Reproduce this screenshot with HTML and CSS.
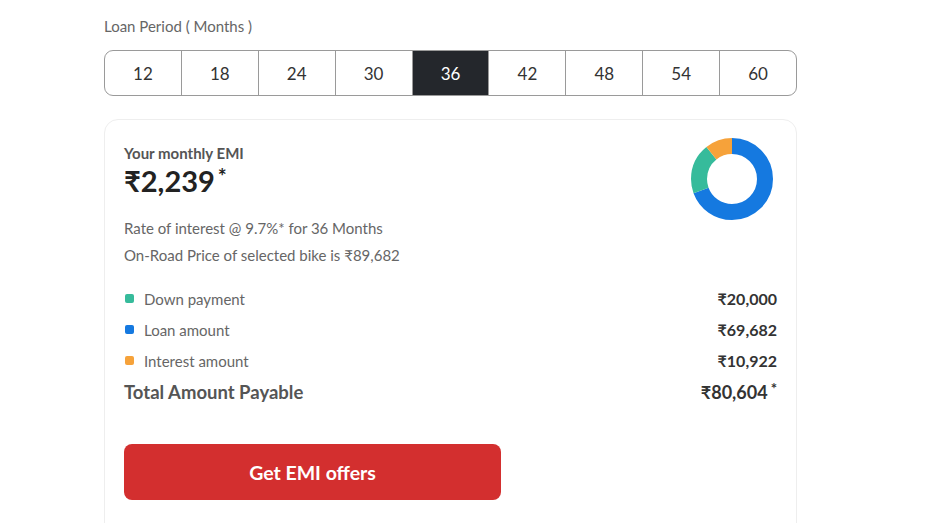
FILE: index.html
```html
<!DOCTYPE html>
<html>
<head>
<meta charset="utf-8">
<link rel="stylesheet" href="styles.css">
</head>
<body>
<div class="wrap">
  <div class="label">Loan Period ( Months )</div>
  <div class="periods">
    <div class="period">12</div>
    <div class="period">18</div>
    <div class="period">24</div>
    <div class="period">30</div>
    <div class="period active">36</div>
    <div class="period">42</div>
    <div class="period">48</div>
    <div class="period">54</div>
    <div class="period">60</div>
  </div>
  <div class="card">
    <div class="top">
      <div class="emi">
        <div class="emi-title">Your monthly EMI</div>
        <div class="emi-value">₹2,239<sup>*</sup></div>
      </div>
      <svg class="donut" width="84" height="84" viewBox="0 0 84 84">
        <g transform="rotate(-90 42 42)">
          <circle cx="42" cy="42" r="33" fill="none" stroke="#1579e0" stroke-width="16" stroke-dasharray="143.6 207.35" stroke-dashoffset="0"/>
          <circle cx="42" cy="42" r="33" fill="none" stroke="#36bb9b" stroke-width="16" stroke-dasharray="41.2 207.35" stroke-dashoffset="-143.6"/>
          <circle cx="42" cy="42" r="33" fill="none" stroke="#f6a23a" stroke-width="16" stroke-dasharray="22.5 207.35" stroke-dashoffset="-184.8"/>
        </g>
      </svg>
    </div>
    <div class="info">Rate of interest @ 9.7%* for 36 Months</div>
    <div class="info">On-Road Price of selected bike is ₹89,682</div>
    <div class="rows">
      <div class="row"><span class="name"><i class="dot teal"></i>Down payment</span><span class="amt">₹20,000</span></div>
      <div class="row"><span class="name"><i class="dot blue"></i>Loan amount</span><span class="amt">₹69,682</span></div>
      <div class="row"><span class="name"><i class="dot orange"></i>Interest amount</span><span class="amt">₹10,922</span></div>
      <div class="row total"><span class="name">Total Amount Payable</span><span class="amt">₹80,604<sup>*</sup></span></div>
    </div>
    <button class="cta">Get EMI offers</button>
  </div>
</div>
</body>
</html>
```

FILE: styles.css
```css
* { box-sizing: border-box; }
html, body { margin: 0; padding: 0; background: #fff; }
body { font-family: Lato, "Open Sans", sans-serif; color: #333; }
.wrap { width: 693px; margin-left: 104px; padding-top: 16px; }
.label { font-size: 15px; line-height: 20px; color: #666; }
.periods { display: flex; margin-top: 14px; height: 46px; border: 1px solid #9a9a9a; border-radius: 9px; overflow: hidden; }
.period { flex: 1; display: flex; align-items: center; justify-content: center; font-size: 17px; color: #333; border-left: 1px solid #9a9a9a; }
.period:first-child { border-left: none; }
.period.active { background: #24272c; color: #fff; }
.card { margin-top: 23px; border: 1px solid #eeeeee; border-radius: 14px; padding: 22px 19px 30px 19px; height: 420px; }
.top { display: flex; justify-content: space-between; align-items: flex-start; }
.emi-title { font-size: 15px; line-height: 20px; font-weight: 700; color: #555; margin-top: 1px; }
.emi-value { font-size: 29px; line-height: 36px; font-weight: 700; color: #222; }
.emi-value sup { font-size: 21px; line-height: 1; vertical-align: top; position: relative; top: 2px; margin-left: 3px; }
.donut { margin-top: -5px; margin-right: 3px; }
.info { font-size: 15px; line-height: 27px; color: #666; }
.top + .info { margin-top: -6px; }
.rows { margin-top: 14px; }
.row { display: flex; justify-content: space-between; align-items: center; height: 31px; }
.name { display: flex; align-items: center; font-size: 15px; color: #666; }
.amt { font-size: 16px; font-weight: 700; color: #333; }
.dot { display: inline-block; width: 9px; height: 9px; border-radius: 2px; margin: 0 10px 0 1px; }
.teal { background: #36bb9b; }
.blue { background: #1579e0; }
.orange { background: #f6a23a; }
.total .name { font-size: 18.5px; font-weight: 700; color: #555; }
.total .amt { font-size: 18px; }
.total sup { font-size: 15px; line-height: 1; vertical-align: top; position: relative; top: 0px; margin-left: 3px; }
.cta { display: block; margin-top: 37px; width: 377px; height: 56px; border: none; border-radius: 8px; background: #d32f2f; color: #fff; font-family: Lato, sans-serif; font-size: 19.5px; font-weight: 700; }
```
